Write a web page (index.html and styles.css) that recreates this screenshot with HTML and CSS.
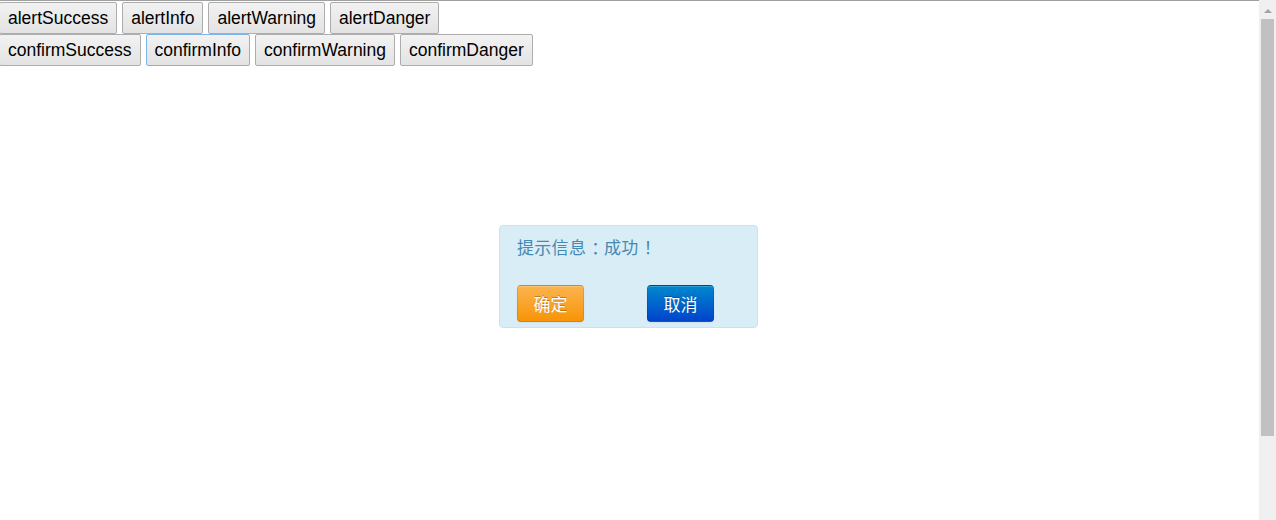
FILE: index.html
```html
<!DOCTYPE html>
<html lang="zh-CN">
<head>
    <meta charset="UTF-8">
    <meta name="viewport" content="width=device-width, initial-scale=1.0">
    <title>dialog demo</title>
    <link rel="stylesheet" href="styles.css">
</head>
<body>
    <div class="page">
        <div class="btn-row">
            <button>alertSuccess</button>
            <button>alertInfo</button>
            <button>alertWarning</button>
            <button>alertDanger</button>
        </div>
        <div class="btn-row">
            <button>confirmSuccess</button>
            <button class="focused">confirmInfo</button>
            <button>confirmWarning</button>
            <button>confirmDanger</button>
        </div>
    </div>

    <div class="dialog dialog-info">
        <div class="dialog-msg">提示信息<span class="punct">：</span>成功<span class="punct">！</span></div>
        <div class="dialog-actions">
            <button class="btn btn-warning">确定</button>
            <button class="btn btn-primary">取消</button>
        </div>
    </div>

    <!-- fake scrollbar -->
    <div class="scrollbar">
        <div class="scroll-up"></div>
        <div class="scroll-thumb"></div>
    </div>
</body>
</html>
```

FILE: styles.css
```css
html, body {
    margin: 0;
    height: 100%;
    overflow: hidden;
    background: #fff;
}
body {
    font-family: Arial, "Liberation Sans", sans-serif;
}
.page {
    margin-right: 17px;
    border-top: 1px solid #a0a0a0;
    padding-top: 1px;
    margin-left: -1px;
}
.btn-row {
    display: flex;
    gap: 5px;
}
.btn-row button {
    height: 32px;
    padding: 0 8px;
    font-family: Arial, "Liberation Sans", sans-serif;
    font-size: 17.5px;
    color: #000;
    background: linear-gradient(#f2f2f2, #e3e3e3);
    border: 1px solid #adadad;
    border-radius: 2px;
}
.btn-row button.focused {
    border-color: #7eb4ea;
}
.dialog {
    position: fixed;
    left: 499px;
    top: 225px;
    width: 259px;
    height: 103px;
    box-sizing: border-box;
    padding: 10px 17px;
    border-radius: 4px;
}
.dialog-info {
    background-color: #d9edf7;
    border: 1px solid #bce8f1;
    color: #4589b3;
}
.dialog-msg {
    font-family: "Noto Sans CJK SC", sans-serif;
    font-size: 17px;
    line-height: 22px;
    letter-spacing: 0.3px;
}
/* SC punctuation sits left in its box; set it half width and centre it */
.punct {
    font-feature-settings: "halt" 1;
    margin: 0 4px 0 5px;
}
.dialog-actions {
    display: flex;
    gap: 63px;
    margin-top: 27px;
}
.btn {
    width: 67px;
    height: 37px;
    padding: 0;
    font-family: "Noto Sans CJK SC", sans-serif;
    font-size: 17px;
    color: #fff;
    text-shadow: 0 -1px 0 rgba(0, 0, 0, 0.25);
    border-radius: 4px;
    border: 1px solid rgba(0, 0, 0, 0.1);
    border-bottom-color: rgba(0, 0, 0, 0.25);
    box-shadow: inset 0 1px 0 rgba(255, 255, 255, 0.2), 0 1px 2px rgba(0, 0, 0, 0.05);
}
.btn-warning {
    background: linear-gradient(#fbb450, #f89406);
}
.btn-primary {
    background: linear-gradient(#0088cc, #0044cc);
}
.scrollbar {
    position: fixed;
    top: 0;
    right: 0;
    width: 17px;
    height: 100%;
    background: #f0f0f0;
}
.scroll-up {
    position: absolute;
    top: 9px;
    left: 5px;
    width: 0;
    height: 0;
    border-left: 4px solid transparent;
    border-right: 4px solid transparent;
    border-bottom: 4px solid #a3a3a3;
}
.scroll-thumb {
    position: absolute;
    top: 19px;
    left: 2px;
    width: 13px;
    height: 417px;
    background: #c1c1c1;
}
```
